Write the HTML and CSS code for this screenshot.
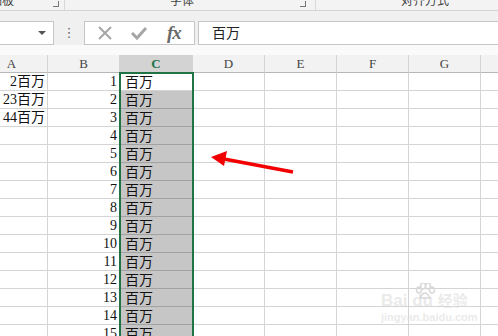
FILE: index.html
```html
<!DOCTYPE html>
<html lang="zh-CN">
<head>
  <meta charset="UTF-8" />
  <title>百万</title>
  <link rel="stylesheet" href="styles.css">
</head>
<body>
  <div class="ribbon">
    <div class="rgroup g1"><span class="rlabel">剪贴板</span><span class="launcher"></span></div>
    <div class="rgroup g2"><span class="rlabel">字体</span><span class="launcher"></span></div>
    <div class="rgroup g3"><span class="rlabel">对齐方式</span></div>
  </div>
  <div class="band"></div>

  <div class="fbar">
    <div class="namebox"><span class="caret"></span></div>
    <div class="dots">⋮</div>
    <div class="fbuttons">
      <svg class="ico" width="16" height="16" viewBox="0 0 16 16"><path d="M2 2 L14 14 M14 2 L2 14" stroke="#a6a6a6" stroke-width="2" fill="none"/></svg>
      <svg class="ico" width="18" height="16" viewBox="0 0 18 16"><path d="M2 8 L7 13 L16 3" stroke="#a6a6a6" stroke-width="3" fill="none"/></svg>
      <span class="fx">fx</span>
    </div>
    <div class="finput">百万</div>
  </div>
  <div class="gap"></div>

  <div class="sheet" id="sheet">
    <div class="hd">A</div>
    <div class="hd">B</div>
    <div class="hd hd-sel">C</div>
    <div class="hd">D</div>
    <div class="hd">E</div>
    <div class="hd">F</div>
    <div class="hd">G</div>
    <div class="hd">H</div>
    <div class="selection"></div>
  </div>

  <svg class="arrow" width="498" height="336" viewBox="0 0 498 336">
    <line x1="224" y1="159" x2="293" y2="172" stroke="#f20000" stroke-width="3.5"/>
    <polygon points="211,157 227,151 224,166" fill="#f20000"/>
  </svg>

  <div class="watermark">
    <svg class="paw" width="20" height="18" viewBox="0 0 20 18">
      <g fill="none" stroke="#d8d8d8" stroke-width="1.5">
        <ellipse cx="4" cy="7" rx="2.5" ry="3"/>
        <ellipse cx="8" cy="3" rx="2.5" ry="3"/>
        <ellipse cx="13" cy="3" rx="2.5" ry="3"/>
        <ellipse cx="17" cy="7" rx="2.5" ry="3"/>
        <path d="M5 15 Q10 5 15 15 Z"/>
      </g>
    </svg>
    <div class="wm-logo">Bai du <span class="wm-cn">经验</span></div>
    <div class="wm-url">jingyan.baidu.com</div>
  </div>

  <script>
    const colA = { 1: "2百万", 2: "23百万", 3: "44百万" };
    const sheet = document.getElementById("sheet");
    const sel = sheet.querySelector(".selection");
    for (let r = 1; r <= 15; r++) {
      const cells = [
        `<div class="cell num">${colA[r] || ""}</div>`,
        `<div class="cell num">${r}</div>`,
        `<div class="cell txt ${r > 1 ? "picked" : ""}">百万</div>`
      ];
      for (let c = 0; c < 5; c++) cells.push(`<div class="cell"></div>`);
      sel.insertAdjacentHTML("beforebegin", cells.join(""));
    }
  </script>
</body>
</html>
```

FILE: styles.css
```css
body {
  margin: 0;
  width: 498px;
  height: 336px;
  overflow: hidden;
  position: relative;
  background: #fff;
  font-family: "Liberation Serif", "Noto Sans CJK SC", serif;
}
.ribbon {
  height: 10px;
  background: #f3f3f3;
  border-bottom: 1px solid #d4d4d4;
  display: flex;
  overflow: hidden;
}
.rgroup {
  display: flex;
  flex-shrink: 0;
  border-right: 1px solid #d8d8d8;
  height: 10px;
  box-sizing: border-box;
}
.rlabel {
  font-family: "Noto Sans CJK SC", sans-serif;
  font-size: 12px;
  line-height: 12px;
  color: #444;
  margin-top: -6px;
}
.launcher {
  width: 5px;
  height: 5px;
  border-right: 1px solid #777;
  border-bottom: 1px solid #777;
  margin: 1px 0 0 auto;
}
.g1 {
  width: 87px;
  margin-left: -22px;
  padding-right: 5px;
}
.g2 {
  width: 251px;
  padding: 0 9px 0 105px;
}
.g3 {
  padding-left: 85px;
  width: 220px;
  border-right: none;
}
.band {
  height: 10px;
  background: #f0f0f0;
}
.fbar {
  display: flex;
  align-items: stretch;
  height: 24px;
  background: #f0f0f0;
}
.namebox {
  width: 56px;
  margin-left: -2px;
  box-sizing: border-box;
  background: #fff;
  border: 1px solid #c6c6c6;
  display: flex;
  align-items: center;
  justify-content: flex-end;
  padding-right: 7px;
}
.caret {
  width: 0;
  height: 0;
  border-left: 4px solid transparent;
  border-right: 4px solid transparent;
  border-top: 4px solid #555;
}
.dots {
  width: 30px;
  text-align: center;
  font-family: "DejaVu Sans", sans-serif;
  font-size: 13px;
  line-height: 24px;
  color: #666;
}
.fbuttons {
  width: 111px;
  box-sizing: border-box;
  background: #fff;
  border: 1px solid #c6c6c6;
  display: flex;
  align-items: center;
  padding-left: 12px;
  gap: 17px;
}
.fx {
  font-family: "Liberation Serif", serif;
  font-style: italic;
  font-weight: bold;
  font-size: 19px;
  color: #6a6a6a;
  margin-left: 2px;
  letter-spacing: -1px;
}
.finput {
  flex: 1;
  margin-left: 3px;
  margin-right: -2px;
  background: #fff;
  border: 1px solid #c6c6c6;
  font-family: "Noto Sans CJK SC", sans-serif;
  font-size: 14px;
  line-height: 21px;
  padding-left: 13px;
  color: #222;
}
.gap {
  height: 10px;
  background: #fafafa;
}
.sheet {
  position: relative;
  margin-left: -24px;
  display: grid;
  grid-template-columns: 72px 72px 73px repeat(5, 72px);
  grid-auto-rows: 18px;
}
.hd, .cell {
  box-sizing: border-box;
  border-right: 1px solid #d4d4d4;
  border-bottom: 1px solid #d4d4d4;
}
.hd {
  background: #f2f2f2;
  border-bottom-color: #b8b8b8;
  text-align: center;
  font-size: 13px;
  line-height: 18px;
  color: #444;
}
.hd-sel {
  background: #d3d3d3;
  color: #217346;
  font-weight: bold;
}
.cell {
  font-size: 14px;
  line-height: 17px;
  color: #111;
  white-space: nowrap;
}
.num {
  text-align: right;
  padding-right: 2px;
}
.cell.num:first-child {
  padding-right: 3px;
}
.txt {
  padding-left: 5px;
  font-family: "Noto Sans CJK SC", sans-serif;
}
.picked {
  background: #c6c6c6;
  border-bottom-color: #a2a2a2;
}
.selection {
  position: absolute;
  left: 143px;
  top: 17px;
  width: 75px;
  height: 300px;
  box-sizing: border-box;
  border: 2px solid #217346;
}
.arrow {
  position: absolute;
  left: 0;
  top: 0;
}
.watermark {
  position: absolute;
  left: 381px;
  top: 283px;
  width: 92px;
  color: rgba(220, 220, 220, 0.6);
  font-family: "Liberation Sans", "Noto Sans CJK SC", sans-serif;
  font-weight: bold;
}
.paw {
  position: absolute;
  left: 34px;
  top: 0;
}
.wm-logo {
  margin-top: 8px;
  font-size: 17px;
  line-height: 20px;
  white-space: nowrap;
}
.wm-cn {
  font-size: 15px;
}
.wm-url {
  font-size: 11px;
  line-height: 13px;
  white-space: nowrap;
}
```
